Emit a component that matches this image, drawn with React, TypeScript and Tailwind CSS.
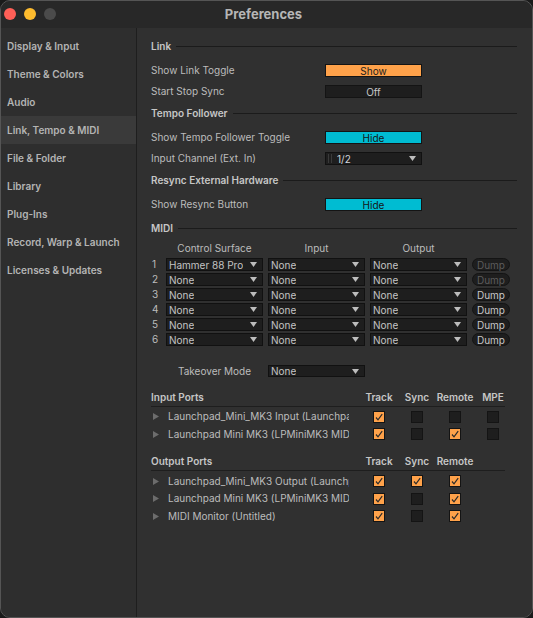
import React from 'react';

const sections = [
  'Display & Input',
  'Theme & Colors',
  'Audio',
  'Link, Tempo & MIDI',
  'File & Folder',
  'Library',
  'Plug-Ins',
  'Record, Warp & Launch',
  'Licenses & Updates',
];

const surfaces = [
  { surface: 'Hammer 88 Pro', dump: false },
  { surface: 'None', dump: false },
  { surface: 'None', dump: true },
  { surface: 'None', dump: true },
  { surface: 'None', dump: true },
  { surface: 'None', dump: true },
];

const inputPorts = [
  { name: 'Launchpad_Mini_MK3 Input (Launchpad Mini MK3 LPMiniMK3 MIDI In)', flags: [true, false, false, false] },
  { name: 'Launchpad Mini MK3 (LPMiniMK3 MIDI In)', flags: [true, false, true, false] },
];

const outputPorts = [
  { name: 'Launchpad_Mini_MK3 Output (Launchpad Mini MK3 LPMiniMK3 MIDI Out)', flags: [true, true, true] },
  { name: 'Launchpad Mini MK3 (LPMiniMK3 MIDI Out)', flags: [true, false, true] },
  { name: 'MIDI Monitor (Untitled)', flags: [true, false, true] },
];

function Arrow() {
  return (
    <svg width="7" height="5" viewBox="0 0 7 5" className="shrink-0">
      <polygon points="0,0 7,0 3.5,5" fill="#bdbdbd" />
    </svg>
  );
}

function Dropdown({ value, height = 'h-[13px]' }: { value: string; height?: string }) {
  return (
    <div
      className={`w-[97px] shrink-0 ${height} flex items-center justify-between bg-[#1e1e1e] border border-[#111] pl-[2px] pr-[5px] text-[#c4c4c4] leading-none`}
    >
      <span className="truncate">{value}</span>
      <Arrow />
    </div>
  );
}

function SectionHeader({ title, spacing = 'mb-[3px]' }: { title: string; spacing?: string }) {
  return (
    <div className={`h-[22px] flex items-center gap-[5px] ${spacing}`}>
      <span className="font-semibold text-[#c6c6c6]">{title}</span>
      <div className="flex-1 h-px bg-[#1b1b1b]" />
    </div>
  );
}

function Row({ label, children }: { label: string; children: React.ReactNode }) {
  return (
    <div className="h-[21px] flex items-center">
      <span className="w-[174px] shrink-0 text-[#bcbcbc]">{label}</span>
      {children}
    </div>
  );
}

function Toggle({ text, tone }: { text: string; tone: 'orange' | 'cyan' | 'off' }) {
  const styles = {
    orange: 'bg-[#ffa24a] text-[#1c1c1c]',
    cyan: 'bg-[#00bcd2] text-[#151515]',
    off: 'bg-[#1e1e1e] text-[#c8c8c8]',
  };
  return (
    <div
      className={`w-[97px] h-[13px] flex items-center justify-center border border-[#141414] leading-none ${styles[tone]}`}
    >
      {text}
    </div>
  );
}

function Check({ on }: { on: boolean }) {
  return (
    <div
      className={`w-[12px] h-[12px] border border-[#141414] flex items-center justify-center ${
        on ? 'bg-[#ffa24a]' : 'bg-[#1e1e1e]'
      }`}
    >
      {on && (
        <svg width="10" height="10" viewBox="0 0 10 10">
          <polyline points="2,5.5 4,7.8 8.2,2.2" fill="none" stroke="#2a2a2a" strokeWidth="1.2" />
        </svg>
      )}
    </div>
  );
}

function PortTable({
  title,
  columns,
  ports,
  rowsTop,
}: {
  title: string;
  columns: string[];
  ports: { name: string; flags: boolean[] }[];
  rowsTop: string;
}) {
  return (
    <div className="w-[354px] mt-[10px]">
      <div className="h-[18px] flex items-center border-b border-[#1e1e1e] font-semibold text-[#c6c6c6]">
        <span className="w-[209px] shrink-0">{title}</span>
        {columns.map((c) => (
          <span key={c} className="w-[38px] shrink-0 text-center">
            {c}
          </span>
        ))}
      </div>
      <div className={rowsTop}>
        {ports.map((p) => (
          <div key={p.name} className="h-[17.5px] flex items-center">
            <div className="w-[17px] shrink-0 pl-[2px]">
              <svg width="6" height="7" viewBox="0 0 6 7">
                <polygon points="0,0 6,3.5 0,7" fill="#6c6c6c" />
              </svg>
            </div>
            <span className="w-[181px] shrink-0 overflow-hidden whitespace-nowrap text-[#bcbcbc]">{p.name}</span>
            <span className="w-[11px] shrink-0" />
            {p.flags.map((f, i) => (
              <div key={i} className="w-[38px] shrink-0 flex justify-center">
                <Check on={f} />
              </div>
            ))}
          </div>
        ))}
      </div>
    </div>
  );
}

export default function App() {
  return (
    <div className="w-[533px] h-[618px] bg-[#1a1a1a] font-['Inter',sans-serif] text-[10px]">
      <div className="h-full flex flex-col rounded-[10px] border border-[#555] overflow-hidden bg-[#2f2f2f]">
        {/* title bar */}
        <div className="h-[27px] shrink-0 relative flex items-center justify-center bg-[#282828]">
          <div className="absolute left-[3px] top-[7px] flex gap-[8px]">
            <span className="w-[12px] h-[12px] rounded-full bg-[#ff5f57]" />
            <span className="w-[12px] h-[12px] rounded-full bg-[#febc2e]" />
            <span className="w-[12px] h-[12px] rounded-full bg-[#4b4b4b]" />
          </div>
          <span className="text-[13px] font-bold text-[#b6b6b6] -ml-[6px]">Preferences</span>
        </div>

        <div className="flex flex-1 min-h-0">
          {/* sidebar */}
          <div className="w-[136px] shrink-0 border-r border-[#1e1e1e] pt-[4px] bg-[#2e2e2e]">
            {sections.map((s) => (
              <div
                key={s}
                className={`h-[28px] flex items-center pl-[6px] font-semibold text-[#b4b4b4] ${
                  s === 'Link, Tempo & MIDI' ? 'bg-[#3a3a3a]' : ''
                }`}
              >
                {s}
              </div>
            ))}
          </div>

          {/* settings panel */}
          <div className="flex-1 pl-[14px] pr-[15px] pt-[7px] bg-[#303030]">
            <SectionHeader title="Link" />
            <Row label="Show Link Toggle">
              <Toggle text="Show" tone="orange" />
            </Row>
            <Row label="Start Stop Sync">
              <Toggle text="Off" tone="off" />
            </Row>

            <SectionHeader title="Tempo Follower" />
            <Row label="Show Tempo Follower Toggle">
              <Toggle text="Hide" tone="cyan" />
            </Row>
            <Row label="Input Channel (Ext. In)">
              <div className="w-[97px] h-[13px] flex items-center bg-[#1e1e1e] border border-[#111] pl-[2px] pr-[5px] leading-none">
                <span className="w-[4px] h-[9px] border-x border-[#3a3a3a] mr-[5px]" />
                <span className="flex-1 text-[#d0d4dc]">1/2</span>
                <Arrow />
              </div>
            </Row>

            <SectionHeader title="Resync External Hardware" />
            <Row label="Show Resync Button">
              <Toggle text="Hide" tone="cyan" />
            </Row>

            <SectionHeader title="MIDI" spacing="mt-[2px]" />
            <div className="h-[18px] flex items-center gap-[5px] text-[#bcbcbc]">
              <span className="w-[10px] shrink-0" />
              <span className="w-[97px] text-center">Control Surface</span>
              <span className="w-[97px] text-center">Input</span>
              <span className="w-[97px] text-center">Output</span>
            </div>
            {surfaces.map((row, i) => (
              <div key={i} className="h-[15px] flex items-center gap-[5px]">
                <span className="w-[10px] shrink-0 pl-px text-[#bcbcbc]">{i + 1}</span>
                <Dropdown value={row.surface} />
                <Dropdown value="None" />
                <Dropdown value="None" />
                <div
                  className={`w-[38px] h-[13px] shrink-0 rounded-full bg-[#1e1e1e] border border-[#141414] flex items-center justify-center leading-none ${
                    row.dump ? 'text-[#c8c8c8]' : 'text-[#5c5c5c]'
                  }`}
                >
                  Dump
                </div>
              </div>
            ))}

            <div className="mt-[16px] h-[16px] flex items-center pl-[27px]">
              <span className="w-[90px] shrink-0 text-[#bcbcbc]">Takeover Mode</span>
              <Dropdown value="None" height="h-[12px]" />
            </div>

            <PortTable
              title="Input Ports"
              columns={['Track', 'Sync', 'Remote', 'MPE']}
              ports={inputPorts}
              rowsTop="pt-px"
            />
            <PortTable
              title="Output Ports"
              columns={['Track', 'Sync', 'Remote']}
              ports={outputPorts}
              rowsTop="pt-[1.5px]"
            />
          </div>
        </div>
      </div>
    </div>
  );
}
